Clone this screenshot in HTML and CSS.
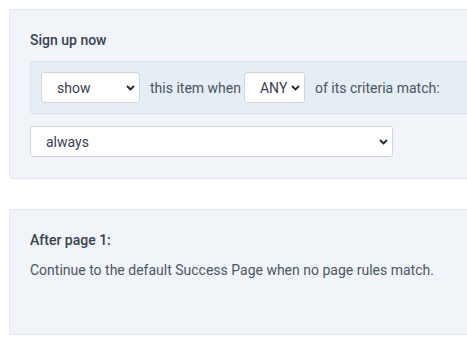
FILE: index.html
```html
<!DOCTYPE html>
<html>
<head>
<title>Page rules</title>
<link rel="stylesheet" href="styles.css">
</head>
<body>
<div class="rules">
    <div class="page-card">
        <div class="page-title">Sign up now</div>
        <div class="criteria">
            <span class="pick-wrap">
                <select class="pick pick-show">
                    <option>show</option>
                    <option>hide</option>
                </select>
                <svg class="chevron" width="9" height="6" viewBox="0 0 9 6"><path d="M1 1 L4.5 4.5 L8 1" fill="none" stroke="#1f2937" stroke-width="1.8"/></svg>
            </span>
            <span class="word">this item when</span>
            <span class="pick-wrap">
                <select class="pick pick-any">
                    <option>ANY</option>
                    <option>ALL</option>
                </select>
                <svg class="chevron" width="9" height="6" viewBox="0 0 9 6"><path d="M1 1 L4.5 4.5 L8 1" fill="none" stroke="#1f2937" stroke-width="1.8"/></svg>
            </span>
            <span class="word">of its criteria match:</span>
        </div>
        <span class="pick-wrap">
            <select class="pick pick-wide">
                <option>always</option>
            </select>
            <svg class="chevron" width="9" height="6" viewBox="0 0 9 6"><path d="M1 1 L4.5 4.5 L8 1" fill="none" stroke="#1f2937" stroke-width="1.8"/></svg>
        </span>
    </div>
    <div class="page-card page-card-tall">
        <div class="page-title">After page 1:</div>
        <div class="page-text">Continue to the default Success Page when no page rules match.</div>
    </div>
</div>
</body>
</html>
```

FILE: styles.css
```css
html, body {
    margin: 0;
    background-color: #fff;
    overflow: hidden;
}
body {
    font-family: Roboto, "Liberation Sans", sans-serif;
    font-size: 14px;
    color: #4b5563;
}
.rules {
    padding: 9px 0 0 9px;
    width: 520px;
    display: flex;
    flex-direction: column;
    gap: 30px;
}
.page-card {
    background-color: #f1f5f9;
    border: 1px solid #e2e8f0;
    border-radius: 3px;
    padding: 20px 20px 21px 20px;
    display: flex;
    flex-direction: column;
    align-items: flex-start;
}
.page-card-tall {
    padding-bottom: 54px;
}
.page-title {
    font-weight: 500;
    color: #374151;
    line-height: 20px;
    margin-bottom: 11px;
}
.page-card-tall .page-title {
    margin-bottom: 10px;
}
.page-text {
    line-height: 20px;
}
.criteria {
    align-self: stretch;
    background-color: #e5edf5;
    border: 1px solid #d9e3ed;
    border-radius: 3px;
    padding: 10px;
    display: flex;
    align-items: center;
    margin-bottom: 12px;
}
.criteria .word {
    margin: 0 3px 0 10px;
}
.criteria .word:last-child {
    margin-left: 10px;
}
.pick-wrap {
    position: relative;
    display: inline-flex;
}
.pick {
    appearance: none;
    font-family: Roboto, "Liberation Sans", sans-serif;
    font-size: 14px;
    color: #374151;
    height: 31px;
    background-color: #fff;
    border: 1px solid #d1d5db;
    border-radius: 3px;
    padding: 0 18px 0 15px;
    margin: 0;
}
.chevron {
    position: absolute;
    right: 5px;
    top: 13px;
    pointer-events: none;
}
.pick-show {
    width: 99px;
}
.pick-any {
    width: 61px;
    padding-right: 10px;
}
.pick-wide {
    width: 363px;
}
```
